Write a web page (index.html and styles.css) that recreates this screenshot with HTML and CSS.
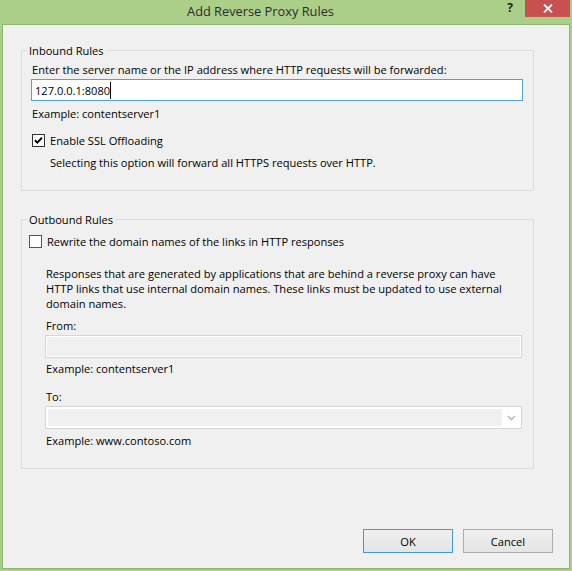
FILE: index.html
```html
<!DOCTYPE html>
<html lang="en">
<head>
<meta charset="utf-8">
<title>Add Reverse Proxy Rules</title>
<link rel="stylesheet" href="styles.css">
</head>
<body>
<div class="window">
  <div class="titlebar">
    <div class="title">Add Reverse Proxy Rules</div>
    <div class="help">?</div>
    <div class="close">
      <svg width="10" height="9" viewBox="0 0 10 9"><path d="M1 0.5L9 8.5M9 0.5L1 8.5" stroke="#fff" stroke-width="1.8" fill="none"/></svg>
    </div>
  </div>
  <div class="client">
    <fieldset class="group inbound">
      <legend class="group-title">Inbound Rules</legend>
      <div class="label first">Enter the server name or the IP address where HTTP requests will be forwarded:</div>
      <div class="textbox focused"><span class="value">127.0.0.1:8080</span><span class="caret"></span></div>
      <div class="hint">Example: contentserver1</div>
      <div class="check-row ssl">
        <span class="checkbox checked"><svg width="11" height="11" viewBox="0 0 11 11"><path d="M2 5.2L4.3 7.6L9 2.6" stroke="#000" stroke-width="2" fill="none"/></svg></span>
        <span class="check-text">Enable SSL Offloading</span>
      </div>
      <div class="subnote">Selecting this option will forward all HTTPS requests over HTTP.</div>
    </fieldset>
    <fieldset class="group outbound">
      <legend class="group-title">Outbound Rules</legend>
      <div class="check-row rewrite">
        <span class="checkbox"></span>
        <span class="check-text">Rewrite the domain names of the links in HTTP responses</span>
      </div>
      <div class="indent">
        <p class="desc">Responses that are generated by applications that are behind a reverse proxy can have<br>HTTP links that use internal domain names. These links must be updated to use external<br>domain names.</p>
        <div class="label from">From:</div>
        <div class="textbox disabled"></div>
        <div class="hint">Example: contentserver1</div>
        <div class="label to">To:</div>
        <div class="combo disabled">
          <div class="combo-edit"></div>
          <div class="combo-arrow"><svg width="9" height="6" viewBox="0 0 9 6"><path d="M1 1L4.5 4.5L8 1" stroke="#bdbdbd" stroke-width="1.6" fill="none"/></svg></div>
        </div>
        <div class="hint">Example: www.contoso.com</div>
      </div>
    </fieldset>
    <div class="buttons">
      <button class="btn default" type="button">OK</button>
      <button class="btn" type="button">Cancel</button>
    </div>
  </div>
</div>
</body>
</html>
```
FILE: styles.css
```css
* { box-sizing: border-box; }
html, body { margin: 0; padding: 0; }
body {
  font-family: "Open Sans", "Noto Sans", sans-serif;
  font-size: 11.1px;
  line-height: 15px;
  color: #000;
  background: #abcf89;
}
.window {
  width: 572px;
  height: 571px;
  background: #abcf89;
  padding: 0 2px 2px 2px;
  display: flex;
  flex-direction: column;
}
.titlebar {
  height: 24px;
  display: flex;
  align-items: flex-start;
  flex: none;
}
.title {
  flex: 1;
  text-align: center;
  padding-left: 18px;
  font-size: 12.8px;
  line-height: 22px;
  color: #2b2b2b;
}
.help {
  width: 12px;
  margin-right: 12px;
  text-align: right;
  font-weight: bold;
  font-size: 12px;
  line-height: 15px;
  color: #222;
}
.close {
  width: 45px;
  height: 17px;
  background: #c75050;
  display: flex;
  align-items: center;
  justify-content: center;
}
.client {
  flex: 1;
  border: 1px solid #8fb76c;
  background: #f0f0f0;
  padding: 18px 16px 0 18px;
  display: flex;
  flex-direction: column;
}
.group {
  margin: 0 19px 0 0;
  border: 1px solid #dcdcdc;
  min-width: 0;
}
.group-title {
  padding: 0 2px;
  line-height: 15px;
}
.inbound { padding: 0 10px 20px 9px; }
.inbound .group-title { margin-left: -4px; }
.outbound { padding: 0 11px 20px 7px; margin-top: 21px; }
.outbound .group-title { margin-left: -2px; }
.label.first { margin-top: 4px; padding-left: 1px; }
.textbox {
  height: 22px;
  border: 1px solid #d5d5d5;
  display: flex;
  align-items: center;
  margin-top: 2px;
}
.textbox.focused {
  border-color: #569de5;
  background: #fff;
  padding-left: 3px;
}
.caret {
  width: 1px;
  height: 17px;
  background: #000;
}
.textbox.disabled {
  height: 23px;
  background: #f0f0f0;
  box-shadow: inset 0 0 0 1px #fff;
}
.hint { margin-top: 5px; padding-left: 1px; }
.check-row {
  display: flex;
  align-items: center;
  height: 15px;
}
.checkbox {
  width: 13px;
  height: 13px;
  border: 1px solid #333;
  background: #fff;
  display: flex;
  align-items: center;
  justify-content: center;
  flex: none;
}
.check-text { margin-left: 5px; }
.ssl { margin-top: 12px; margin-left: 1px; }
.subnote { margin-top: 7px; padding-left: 19px; }
.rewrite { margin-top: 7px; }
.rewrite .checkbox { border-color: #555; }
.indent { padding-left: 16px; }
.desc { margin: 17px 0 0 0; padding-left: 1px; }
.label.from { margin-top: 7px; padding-left: 1px; }
.indent .hint { margin-top: 3px; }
.label.to { margin-top: 13px; padding-left: 1px; }
.combo {
  height: 23px;
  margin-top: 2px;
  border: 1px solid #d5d5d5;
  background: #fff;
  padding: 2px;
  display: flex;
}
.combo-edit { flex: 1; background: #f0f0f0; }
.combo-arrow {
  width: 17px;
  display: flex;
  align-items: center;
  justify-content: center;
  padding-left: 2px;
}
.indent .combo + .hint { margin-top: 4px; }
.buttons {
  margin-top: 60px;
  display: flex;
  justify-content: flex-end;
  gap: 10px;
}
.btn {
  width: 90px;
  height: 24px;
  font-family: inherit;
  font-size: 11.1px;
  color: #000;
  border: 1px solid #adadad;
  background: linear-gradient(#f0f0f0, #e5e5e5);
  padding: 0;
  margin: 0;
}
.btn.default { border-color: #3c9be8; }
```
